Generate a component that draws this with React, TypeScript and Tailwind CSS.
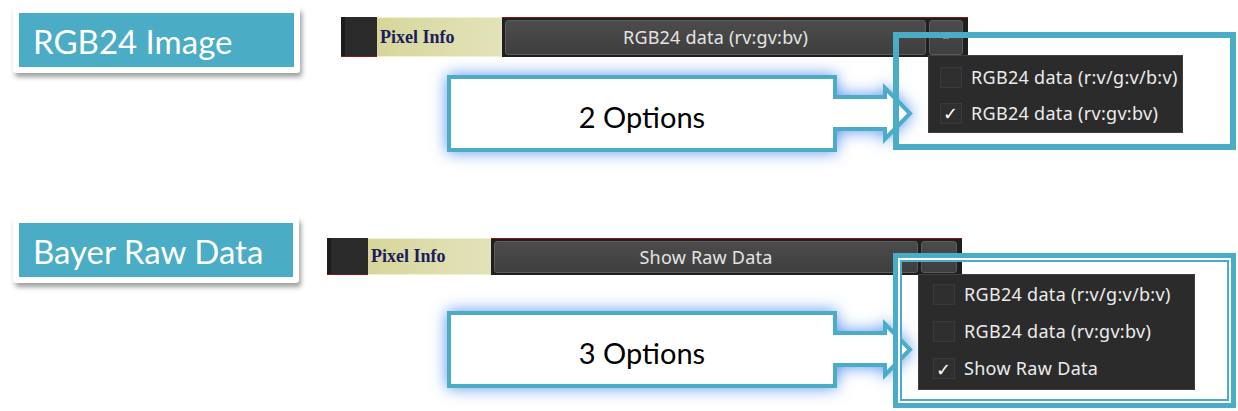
import type { ReactNode } from 'react';

type Option = { label: string; checked: boolean };

const teal = '#4bacc6';

function LabelCard({ text, className }: { text: string; className: string }) {
  return (
    <div className={`shrink-0 rounded-[3px] bg-white p-[6px] shadow-[2px_4px_5px_rgba(0,0,0,0.38)] ${className}`}>
      <div className="flex h-full items-center bg-[#4aacc5] pl-[14px] pt-[3px] font-['Lato',sans-serif] text-[33px] leading-none text-white">
        {text}
      </div>
    </div>
  );
}

function Toolbar({
  value,
  sizes,
}: {
  value: string;
  sizes: { h: string; black: string; info: string; button: string; arrow: string };
}) {
  return (
    <div className={`flex ${sizes.h}`}>
      {/* window grip */}
      <div className={`flex ${sizes.black} border-b border-[#8b1414] bg-[#2a2a2a]`}>
        <div className="w-[4px] bg-[#1c1c1c]" />
      </div>
      <div
        className={`flex ${sizes.info} items-center border-y border-[#f2f2cc] bg-gradient-to-r from-[#d6d69a] to-[#e3e3bb] pl-[3px] font-['Liberation_Serif',serif] text-[18px] font-bold text-[#1b1b5e]`}
      >
        Pixel Info
      </div>
      {/* display mode dropdown */}
      <div className="flex flex-1 gap-[3px] border-t border-[#8b1414] bg-[#1f1f1f] p-[2px] pl-[3px]">
        <div
          className={`flex ${sizes.button} items-center justify-center rounded-[3px] border border-[#5c5c5c] bg-gradient-to-b from-[#4c4c4c] to-[#3e3e3e] font-['Noto_Sans',sans-serif] text-[18px] tracking-[0.2px] text-[#e4e4e4]`}
        >
          {value}
        </div>
        <div className={`flex ${sizes.arrow} items-center justify-center rounded-[3px] border border-[#5c5c5c] bg-gradient-to-b from-[#4c4c4c] to-[#3e3e3e]`}>
          <span className="h-[3px] w-[6px] bg-[#7c7c7c]" />
        </div>
      </div>
    </div>
  );
}

function Callout({ text, className }: { text: string; className: string }) {
  return (
    <div className={`relative h-[77px] w-[465px] ${className}`}>
      <svg
        width="465"
        height="77"
        viewBox="0 0 465 77"
        className="absolute inset-0 overflow-visible drop-shadow-[0_0_8px_rgba(70,135,235,0.9)]"
      >
        <path
          d="M2 2 H388 V22 H438 V13 L463 38.5 L438 64 V54 H388 V75 H2 Z"
          fill="white"
          stroke={teal}
          strokeWidth="4"
          strokeLinejoin="miter"
        />
      </svg>
      <div className="relative flex h-full w-[390px] items-center justify-center pt-[7px] font-['Lato',sans-serif] text-[29px] text-black">
        {text}
      </div>
    </div>
  );
}

function CheckMenu({ options, className, row, pad }: { options: Option[]; className: string; row: string; pad: string }) {
  return (
    <div className={`absolute z-10 border border-[#3f3f3f] bg-[#2b2b2b] ${className}`}>
      {options.map(o => (
        <div
          key={o.label}
          className={`flex ${row} items-center ${pad} font-['Noto_Sans',sans-serif] text-[18px] tracking-[0.3px] text-[#ececec]`}
        >
          <span className="mr-[9px] flex h-[21px] w-[22px] items-center justify-center border border-[#3a3a3a] bg-[#2f2f2f] text-[18px] leading-none text-white">
            {o.checked ? '✓' : ''}
          </span>
          {o.label}
        </div>
      ))}
    </div>
  );
}

function Frame({ className, children }: { className: string; children?: ReactNode }) {
  return <div className={`pointer-events-none absolute z-20 ${className}`}>{children}</div>;
}

export default function App() {
  return (
    <div className="h-[411px] w-[1238px] overflow-hidden bg-white">
      {/* RGB24 image mode */}
      <section className="relative flex h-[205px] items-start">
        <LabelCard text="RGB24 Image" className="ml-[13px] mt-[7px] h-[66px] w-[287px]" />
        <div className="ml-[41px] mt-[17px] flex w-[627px] flex-col">
          <Toolbar
            value="RGB24 data (rv:gv:bv)"
            sizes={{ h: 'h-[40px]', black: 'w-[36px]', info: 'w-[125px]', button: 'w-[421px]', arrow: 'w-[34px]' }}
          />
          <Callout text="2 Options" className="ml-[106px] mt-[18px]" />
        </div>
        <CheckMenu
          className="left-[928px] top-[55px] w-[255px] pt-[3px] pb-[1px]"
          row="h-[36px]"
          pad="pl-[11px]"
          options={[
            { label: 'RGB24 data (r:v/g:v/b:v)', checked: false },
            { label: 'RGB24 data (rv:gv:bv)', checked: true },
          ]}
        />
        <Frame className="left-[893px] top-[32px] h-[118px] w-[343px] border-[6px] border-[#4bacc6]" />
      </section>

      {/* Bayer raw mode */}
      <section className="relative flex h-[206px] items-start">
        <LabelCard text="Bayer Raw Data" className="ml-[13px] mt-[12px] h-[66px] w-[286px]" />
        <div className="ml-[28px] mt-[33px] flex w-[635px] flex-col">
          <Toolbar
            value="Show Raw Data"
            sizes={{ h: 'h-[37px]', black: 'w-[41px]', info: 'w-[123px]', button: 'w-[424px]', arrow: 'w-[36px]' }}
          />
          <Callout text="3 Options" className="ml-[120px] mt-[36px]" />
        </div>
        <CheckMenu
          className="left-[918px] top-[69px] w-[277px] pt-[1px] pb-[2px]"
          row="h-[37px]"
          pad="pl-[14px]"
          options={[
            { label: 'RGB24 data (r:v/g:v/b:v)', checked: false },
            { label: 'RGB24 data (rv:gv:bv)', checked: false },
            { label: 'Show Raw Data', checked: true },
          ]}
        />
        <Frame className="left-[893px] top-[48px] h-[155px] w-[343px] border-[5px] border-[#4bacc6] shadow-[inset_0_0_0_2px_white,inset_0_0_0_4px_#4bacc6]" />
      </section>
    </div>
  );
}
